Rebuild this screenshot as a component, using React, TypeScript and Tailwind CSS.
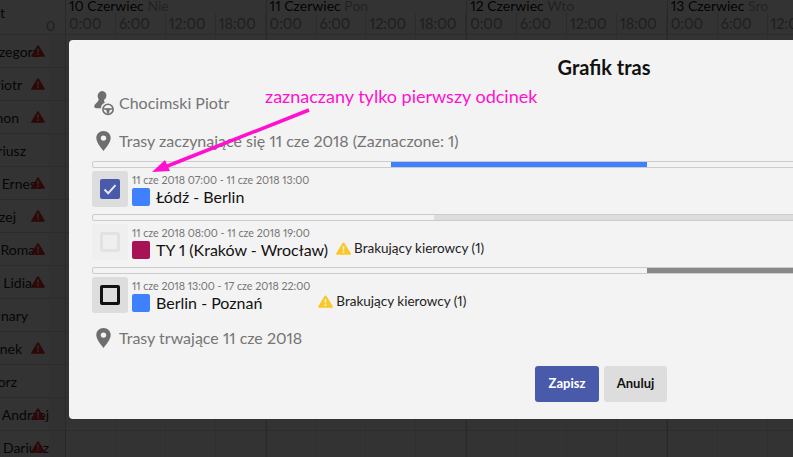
import React from "react"

const days = [
	{ date: "10 Czerwiec", name: "Nie" },
	{ date: "11 Czerwiec", name: "Pon" },
	{ date: "12 Czerwiec", name: "Wto" },
	{ date: "13 Czerwiec", name: "Sro" },
]
const hours = ["0:00", "6:00", "12:00", "18:00"]

const people = [
	{ name: "Grzegorz", pad: "pr-[10px]", warn: true },
	{ name: "Piotr", pad: "pr-[27px]", warn: true },
	{ name: "Szymon", pad: "pr-[30px]", warn: true },
	{ name: "Dariusz", pad: "pr-[23px]", warn: false },
	{ name: "Kiper Ernest", pad: "pr-[8px]", warn: true },
	{ name: "Andrzej", pad: "pr-[33px]", warn: true },
	{ name: "Sobczyki Roman", pad: "pr-[6px]", warn: true },
	{ name: "Kubiako Lidia", pad: "pr-[17px]", warn: true },
	{ name: "Seminary", pad: "pr-[21px]", warn: false },
	{ name: "Zdenek", pad: "pr-[27px]", warn: true },
	{ name: "Fiedorz", pad: "pr-[32px]", warn: false },
	{ name: "Kaczmarz Andrzej", pad: "pr-0", warn: true },
	{ name: "Kowalski Dariusz", pad: "pr-0", warn: true },
]

const Triangle = ({ className }: { className: string }) => (
	<svg viewBox="0 0 14 12" className={className}>
		<path
			fill="currentColor"
			d="M7 0.3c.4 0 .7.2.9.5l5.8 9.6c.4.7-.1 1.4-.9 1.4H1.2c-.8 0-1.3-.7-.9-1.4L6.100.8c.2-.3.5-.5.9-.5z"
		/>
		<path fill="#f3f3f3" fillOpacity="0.9" d="M6.200 3.600h1.600l-.2 4.200H6.400zM6.200 8.600h1.600v1.500H6.200z" />
	</svg>
)

const Pin = () => (
	<svg viewBox="0 0 15 20" className="h-5 w-[15px] shrink-0 text-[#6e6e6e]">
		<path
			fill="currentColor"
			fillRule="evenodd"
			d="M7.500 0C3.400 0 .3 3 .3 7c0 4.200 4.400 9.500 7.200 13 2.800-3.500 7.200-8.800 7.200-13 0-4-3.100-7-7.200-7zm0 4.400a2.700 2.700 0 1 1 0 5.400 2.700 2.700 0 0 1 0-5.400z"
		/>
	</svg>
)

const Driver = () => (
	<svg viewBox="0 0 20 25" className="h-[25px] w-5 shrink-0 text-[#6e6e6e]">
		<ellipse cx="8" cy="4.800" rx="4.300" ry="4.800" fill="currentColor" transform="rotate(15 8 4.800)" />
		<path
			fill="currentColor"
			d="M4.800 7.500L10.200 8.500C9.800 10 10 11 11.200 11.600 8.300 12.600 7 14.500 7 17.200L2.300 17.200C.4 17.200-.3 15.600.5 14.200 1.800 12.200 4.700 10.800 4.800 7.500z"
		/>
		<circle cx="14" cy="18.300" r="5.100" fill="none" stroke="currentColor" strokeWidth="1.600" />
		<path fill="currentColor" d="M9.500 17.200h9l-.2 1.300-2.700.4-.6 3.400h-2l-.6-3.400-2.700-.4z" />
	</svg>
)

const Bar = ({ offset, fill }: { offset: string; fill: string }) => (
	<div className="flex h-[7px] w-[1024px] rounded-[2px] border border-[#cccccc]">
		<div className={offset} />
		{fill && <div className={fill} />}
	</div>
)

const Warning = () => (
	<div className="mb-[4px] ml-[8px] flex items-center self-end">
		<Triangle className="h-[13px] w-[15px] text-[#fbc723]" />
		<span className="ml-[3px] text-[13.5px] leading-4 text-[#222222]">Brakujący kierowcy (1)</span>
	</div>
)

const RouteRow = ({
	time,
	name,
	color,
	box,
	children,
}: {
	time: string
	name: string
	color: string
	box: React.ReactNode
	children?: React.ReactNode
}) => (
	<div className="flex h-9 items-stretch">
		{box}
		<div className="ml-[4px] flex flex-col">
			<div className="mt-[2px] text-[10.7px] leading-[13px] text-[#757575]">{time}</div>
			<div className="mt-[2px] flex items-center">
				<div className={`h-[18px] w-[18px] rounded-[2px] ${color}`} />
				<div className="ml-[6px] text-[16px] leading-[18px] text-[#111111]">{name}</div>
			</div>
		</div>
		{children}
	</div>
)

export default function App() {
	return (
		<div className="relative h-[457px] w-[793px] overflow-hidden bg-white font-['Lato',sans-serif] proportional-nums">
			{/* page behind the dialog */}
			<div className="flex h-[35px] border-b border-[#dddddd]">
				<div className="flex w-[66px] shrink-0 flex-col border-r border-[#cccccc] pt-[6px] text-[14px] leading-[13px] text-[#222222]">
					<span>t</span>
					<span className="ml-[46px] text-[#999999]">0</span>
				</div>
				{days.map((day) => (
					<div key={day.date} className="flex w-[200.6px] shrink-0 flex-col border-r border-[#cccccc]">
						<div className="mt-[-2px] h-[15px] pl-[3px] text-[14px] leading-[16px] whitespace-nowrap text-[#111111]">
							{day.date} <span className="text-[#aaaaaa]">{day.name}</span>
						</div>
						<div className="flex flex-1">
							{hours.map((hour) => (
								<div
									key={hour}
									className="flex-1 border-r border-[#dddddd] pt-[3px] pl-[3px] text-[14.5px] leading-4 text-[#999999]"
								>
									{hour}
								</div>
							))}
						</div>
					</div>
				))}
			</div>
			{people.map((person) => (
				<div key={person.name} className="relative flex h-[33px] border-b border-[#dddddd]">
					<div
						className={`flex w-[49px] shrink-0 items-center justify-end overflow-hidden text-[14px] whitespace-nowrap text-[#222222] ${person.pad}`}
					>
						{person.name}
					</div>
					<div className="w-[17px] shrink-0 border-r border-[#cccccc] bg-[#f2f2f2]" />
					{days.map((day) => (
						<div key={day.date} className="flex w-[200.6px] shrink-0 border-r border-[#cccccc]">
							{hours.map((hour) => (
								<div key={hour} className="flex-1 border-r border-[#eeeeee]" />
							))}
						</div>
					))}
					{person.warn && <Triangle className="absolute top-[10px] left-[31px] h-3 w-[14px] text-[#db2828]" />}
				</div>
			))}
			<div className="absolute inset-0 bg-black/80" />

			{/* dialog */}
			<div className="absolute top-[40px] left-[69px] w-[1070px] rounded-[4px] bg-[#f3f3f3] px-[23px] pt-[14px] pb-[17px]">
				<div className="text-center text-[20px] leading-[26px] font-bold text-[#111111]">Grafik tras</div>
				<div className="mt-[11px] flex h-6 items-center">
					<div className="ml-[2px] w-[25px]">
						<Driver />
					</div>
					<span className="text-[16px] text-[#757575]">Chocimski Piotr</span>
				</div>
				<div className="mt-[14px] flex h-6 items-center">
					<div className="ml-[4px] w-[23px]">
						<Pin />
					</div>
					<span className="text-[16px] text-[#757575]">Trasy zaczynające się 11 cze 2018 (Zaznaczone: 1)</span>
				</div>

				<div className="mt-[8px]">
					<Bar offset="w-[298px]" fill="w-[256px] bg-[#3f80ff]" />
				</div>
				<div className="mt-[3px]">
					<RouteRow
						time="11 cze 2018 07:00 - 11 cze 2018 13:00"
						name="Łódź - Berlin"
						color="bg-[#3f80ff]"
						box={
							<div className="flex h-9 w-9 items-center justify-center rounded-[3px] bg-[#dddddd]">
								<div className="flex h-5 w-5 items-center justify-center rounded-[2px] bg-[#4a5aab]">
									<svg viewBox="0 0 20 20" className="h-5 w-5">
										<path d="M4.500 10.500l3.700 3.700 7.300-8" fill="none" stroke="#e4e7f5" strokeWidth="2" />
									</svg>
								</div>
							</div>
						}
					/>
				</div>

				<div className="mt-[7px]">
					<Bar offset="w-[341px]" fill="flex-1 bg-[#dddddd]" />
				</div>
				<div className="mt-[3px]">
					<RouteRow
						time="11 cze 2018 08:00 - 11 cze 2018 19:00"
						name="TY 1 (Kraków - Wrocław)"
						color="bg-[#a81355]"
						box={
							<div className="flex h-9 w-9 items-center justify-center rounded-[3px] bg-[#efefef]">
								<div className="h-5 w-5 rounded-[2px] border-[3px] border-[#e2e2e2]" />
							</div>
						}
					>
						<Warning />
					</RouteRow>
				</div>

				<div className="mt-[7px]">
					<Bar offset="w-[554px]" fill="flex-1 bg-[#888888]" />
				</div>
				<div className="mt-[3px]">
					<RouteRow
						time="11 cze 2018 13:00 - 17 cze 2018 22:00"
						name="Berlin - Poznań"
						color="bg-[#3f80ff]"
						box={
							<div className="flex h-9 w-9 items-center justify-center rounded-[3px] bg-[#dddddd]">
								<div className="h-5 w-5 rounded-[2px] border-[3px] border-[#111111]" />
							</div>
						}
					>
						<Warning />
					</RouteRow>
				</div>

				<div className="mt-[13px] flex h-6 items-center">
					<div className="ml-[4px] w-[23px]">
						<Pin />
					</div>
					<span className="text-[16px] text-[#757575]">Trasy trwające 11 cze 2018</span>
				</div>

				<div className="mt-[16px] flex justify-center gap-[5px] pr-[6px]">
					<button className="h-9 w-16 rounded-[3px] bg-[#4a5aab] text-[13px] font-bold text-white">Zapisz</button>
					<button className="h-9 w-[63px] rounded-[3px] bg-[#dddddd] text-[13px] font-bold text-[#111111]">
						Anuluj
					</button>
				</div>
			</div>

			{/* annotation pasted on the screenshot */}
			<div className="absolute top-[83px] left-[265px] text-[18px] leading-[26px] whitespace-nowrap text-[#ff10d0]">
				zaznaczany tylko pierwszy odcinek
			</div>
			<svg viewBox="0 0 793 457" className="pointer-events-none absolute inset-0 h-[457px] w-[793px]">
				<path d="M309 110L165 167" stroke="#ff10d0" strokeWidth="3.500" fill="none" />
				<path d="M152 172L165 160L170 171z" fill="#ff10d0" />
			</svg>
		</div>
	)
}
